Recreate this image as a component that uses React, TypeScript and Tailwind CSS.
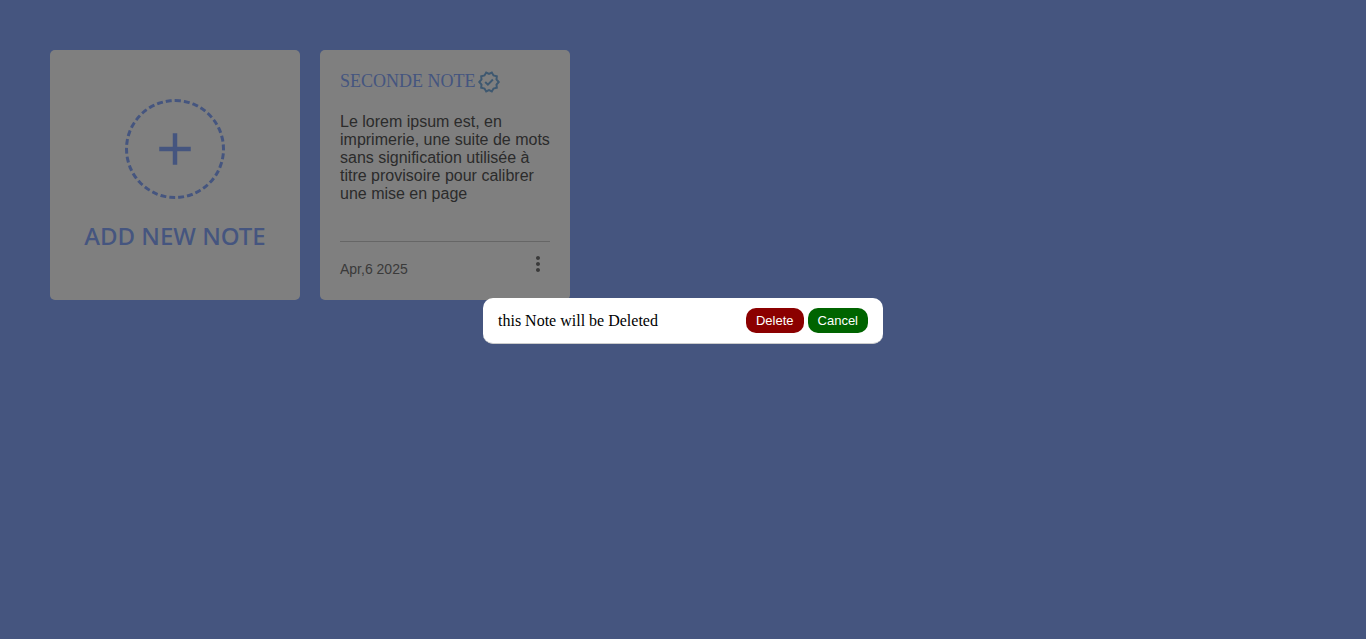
import { useState } from "react";
import { BiDotsVerticalRounded, BiPlus } from "react-icons/bi";

type Note = { title: string; body: string; date: string };

const initialNotes: Note[] = [
  {
    title: "SECONDE NOTE",
    body: "Le lorem ipsum est, en imprimerie, une suite de mots sans signification utilisée à titre provisoire pour calibrer une mise en page",
    date: "Apr,6 2025",
  },
];

function VerifiedIcon() {
  return (
    <svg
      width="24"
      height="24"
      viewBox="0 0 24 24"
      fill="none"
      stroke="currentColor"
      strokeWidth="2"
      aria-hidden="true"
      className="shrink-0 text-[#7cb0e0]"
    >
      <path d="M21.7 12l-2.2 2.5.3 3.3-3.3.75-1.7 2.85L12 20.1l-2.8 1.3-1.7-2.85-3.3-.75.3-3.3L2.3 12l2.2-2.5-.3-3.3 3.3-.75L9.2 2.6l2.8 1.3 2.8-1.3 1.7 2.85 3.3.75-.3 3.3z" />
      <path d="M8.2 12l2.7 2.6 5-5.1" />
    </svg>
  );
}

function AddCard() {
  return (
    <button
      type="button"
      className="flex h-[250px] flex-col items-center justify-center gap-[21px] rounded-[5px] bg-white pt-px text-[#8aabff]"
    >
      <span className="flex size-[100px] items-center justify-center rounded-full border-3 border-dashed border-[#8aabff]">
        <BiPlus size={54} />
      </span>
      <span className="font-['Noto_Sans',sans-serif] text-2xl font-medium">ADD NEW NOTE</span>
    </button>
  );
}

function NoteCard({ note, onMenu }: { note: Note; onMenu: () => void }) {
  return (
    <article className="flex h-[250px] flex-col justify-between rounded-[5px] bg-white px-5 pt-5 pb-[23px] font-['Liberation_Sans',sans-serif]">
      <div>
        <h2 className="flex items-start gap-px font-['Liberation_Serif',serif] text-lg leading-[22px] text-[#8aabff]">
          {note.title}
          <VerifiedIcon />
        </h2>
        <p className="mt-[19px] text-base leading-[18px] text-[#575757]">{note.body}</p>
      </div>
      <footer className="flex items-start justify-between border-t border-[#cccccc] pt-2.5">
        <time dateTime="2025-04-06" className="pt-[9px] text-sm leading-4 text-[#757575]">
          {note.date}
        </time>
        <button type="button" aria-label="Note menu" onClick={onMenu} className="text-[#757575]">
          <BiDotsVerticalRounded size={24} />
        </button>
      </footer>
    </article>
  );
}

export default function App() {
  const [notes, setNotes] = useState(initialNotes);
  const [pending, setPending] = useState<Note | null>(initialNotes[0]);

  return (
    <main className="min-h-screen bg-[#8aabff] p-[50px]">
      <div className="grid grid-cols-[repeat(auto-fill,250px)] gap-5">
        <AddCard />
        {notes.map((note) => (
          <NoteCard key={note.title} note={note} onMenu={() => setPending(note)} />
        ))}
      </div>

      {pending && (
        <div className="fixed inset-0 flex items-center justify-center bg-black/50 px-4 pt-[19px] pb-4">
          <div
            role="dialog"
            aria-modal="true"
            aria-labelledby="confirm-text"
            className="flex w-full max-w-[400px] items-center justify-between rounded-[10px] border-b border-[#cccccc] bg-white px-[15px] py-2.5 text-black"
          >
            <p id="confirm-text" className="font-['Liberation_Serif',serif] text-base leading-6">
              this Note will be Deleted
            </p>
            <div className="flex gap-1 font-['Liberation_Sans',sans-serif] text-[13px] leading-[15px] text-white">
              <button
                type="button"
                className="rounded-[10px] bg-[#8b0000] px-2.5 py-[5px]"
                onClick={() => {
                  setNotes(notes.filter((n) => n !== pending));
                  setPending(null);
                }}
              >
                Delete
              </button>
              <button
                type="button"
                className="rounded-[10px] bg-[#006400] px-2.5 py-[5px]"
                onClick={() => setPending(null)}
              >
                Cancel
              </button>
            </div>
          </div>
        </div>
      )}
    </main>
  );
}
